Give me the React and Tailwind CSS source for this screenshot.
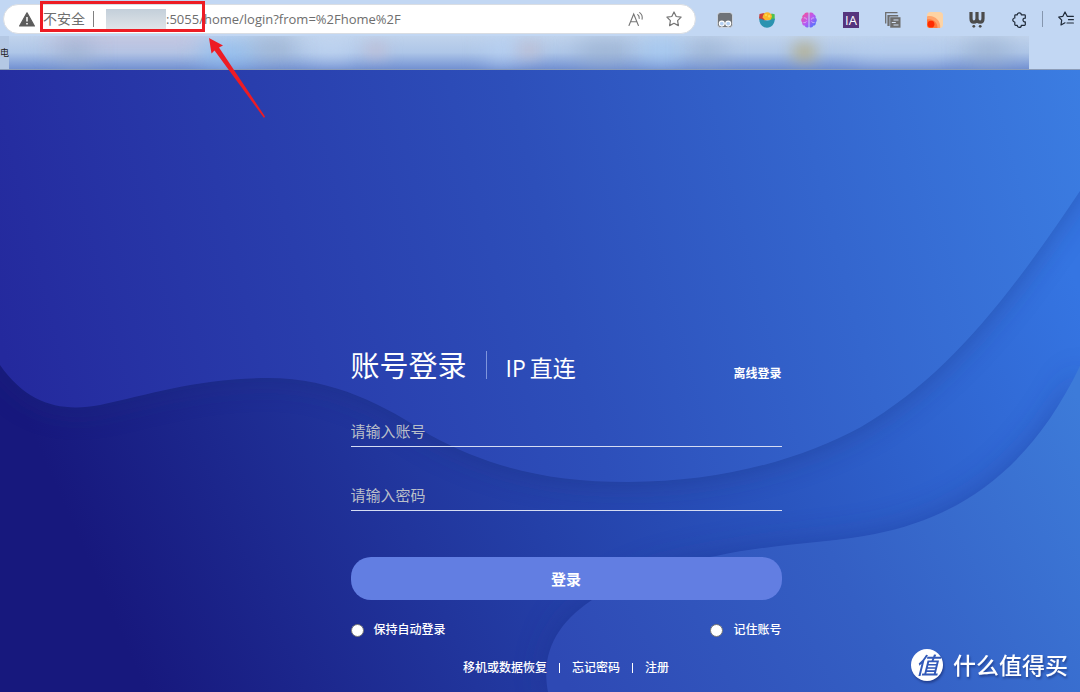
import { useState } from 'react';

function WarningIcon() {
  return (
    <svg viewBox="0 0 16 15" className="h-[15px] w-4 shrink-0" aria-hidden="true">
      <path d="M8 .8 15.4 14H.6z" fill="#5c5c5c" stroke="#5c5c5c" strokeWidth="1.2" strokeLinejoin="round" />
      <path d="M8 5v4.6M8 11v1.6" stroke="#fff" strokeWidth="1.5" />
    </svg>
  );
}

function ReadAloudIcon() {
  return (
    <svg viewBox="0 0 16 16" className="size-4" fill="none" stroke="#757575" strokeWidth="1.1" strokeLinecap="round" aria-hidden="true">
      <path d="M1 14.5 5.7 3l4.7 11.5M2.6 10.7h6.2" />
      <path d="M9.7 3.6c1.2.9 1.7 2.2 1.5 3.8M11.7 1.6c1.9 1.4 2.9 3.8 2.4 6.6" />
    </svg>
  );
}

function StarIcon() {
  return (
    <svg viewBox="0 0 16 16" className="size-4" fill="none" stroke="#757575" strokeWidth="1.2" strokeLinejoin="round" aria-hidden="true">
      <path d="M8 1l2.200 4.500 4.900.7-3.500 3.500.8 4.900L8 12.300l-4.400 2.300.8-4.900L.900 6.200l4.900-.7z" />
    </svg>
  );
}

const extensions = [
  {
    name: 'Tampermonkey',
    icon: (
      <>
        <rect x=".4" y=".4" width="15.2" height="15.2" rx="3.4" fill="#6f7378" stroke="#dfe6ef" strokeWidth=".8" />
        <circle cx="4.8" cy="11.6" r="2.5" fill="#b5d0f2" stroke="#fff" strokeWidth="1.1" />
        <circle cx="11.2" cy="11.6" r="2.5" fill="#b5d0f2" stroke="#fff" strokeWidth="1.1" />
      </>
    ),
  },
  {
    name: 'Salad',
    icon: (
      <>
        <path d="M.5 2 5.500 1l2 7.500H1.200L0 6z" fill="#c8403c" />
        <path d="M10 8 12.500 1.500l3.200.7V8z" fill="#4fc050" />
        <path d="M3.500 5.500C4 2 6 .2 8.300.2c2.500 0 4.400 1.800 4.700 4.300L11.500 8H6z" fill="#fbb829" />
        <circle cx="7" cy="3" r="1" fill="#ffdc4f" />
        <circle cx="10.2" cy="4.2" r="1.2" fill="#ffdc4f" />
        <path d="M.2 6.500C2.500 6.500 4.500 8.600 8 8.600s5.500-2.100 7.800-2.100c0 5.500-3.300 9.300-7.800 9.300S.2 12 .2 6.500z" fill="#2b93b0" />
      </>
    ),
  },
  {
    name: 'Brain',
    icon: (
      <>
        <defs>
          <linearGradient id="brain" x1="0" y1="0" x2="1" y2="1">
            <stop offset="0" stopColor="#ff4f8a" />
            <stop offset=".5" stopColor="#b95af2" />
            <stop offset="1" stopColor="#2f7bff" />
          </linearGradient>
        </defs>
        <path
          d="M7.500.8C5.500-.1 3.500.6 3.200 2.400 1.500 2.800.900 4.400 1.500 5.800-.2 7-.1 9.300 1.200 10.300c-.3 2 .8 3.200 2.300 3.300.8 1.900 2.700 2.300 4 1.300zM8.500.8c2-.9 4-.2 4.300 1.600 1.700.4 2.300 2 1.700 3.400 1.700 1.200 1.600 3.500.3 4.500.3 2-.8 3.200-2.300 3.300-.8 1.900-2.700 2.300-4 1.300z"
          fill="url(#brain)"
        />
        <path
          d="M2.800 6c1.500-.5 2.700.2 2.700 1.500M2.500 10.500c1.200.3 2.500-.2 3-1M13.200 6c-1.500-.5-2.700.2-2.700 1.500M13.500 10.500c-1.200.3-2.500-.2-3-1"
          fill="none"
          stroke="#d9ccf5"
          strokeWidth=".8"
        />
      </>
    ),
  },
  { name: 'Internet Archive', badge: 'IA' },
  {
    name: 'Copy pages',
    icon: (
      <>
        <path d="M.7 11.500V.7h11.800" fill="none" stroke="#6d6d6d" strokeWidth="1.3" />
        <path d="M2.400 3h10.800v1.600H4.600V14H2.400z" fill="#6d6d6d" />
        <path d="M5.200 5.200H15.500v10.500H5.200z" fill="#6d6d6d" />
        <path d="M8.500 8h5M6.800 10.500h4M8.500 13h5" stroke="#d5e2f5" strokeWidth="1.1" />
      </>
    ),
  },
  {
    name: 'Orange',
    icon: (
      <>
        <rect width="16" height="16" rx="3.5" fill="#fdd3a4" />
        <path d="M0 4.500C6.500 2.500 14 8 13.200 16H3a3 3 0 0 1-3-3z" fill="#ffa36b" />
        <path d="M0 7.500C5.500 6 10.500 10 10.500 16H3a3 3 0 0 1-3-3z" fill="#ff7a3c" />
        <circle cx="4" cy="12.200" r="3.400" fill="#ff2b00" />
      </>
    ),
  },
  {
    name: 'Web tools',
    icon: (
      <>
        <path d="M2 0v6.500C2 8.800 3 10.200 4.800 10.200S8 8.800 8 6.500V0v6.500c0 2.300 1.300 3.700 3.200 3.700S14 8.800 14 6.500V0" fill="none" stroke="#4b4b4b" strokeWidth="3.200" />
        <circle cx="4.800" cy="14.300" r="1.400" fill="#4b4b4b" />
        <circle cx="11.200" cy="14.300" r="1.400" fill="#4b4b4b" />
      </>
    ),
  },
  {
    name: 'Extensions',
    icon: (
      <path
        d="M4.600 2.800h1.700a2 2 0 0 1 4 0h3.200a.8.8 0 0 1 .8.8v2.600a1.900 1.900 0 1 0 0 3.700v2.700a.8.8 0 0 1-.8.800h-3.200a2 2 0 0 1-4 0H4.600a.8.8 0 0 1-.8-.8V10a2 2 0 0 1 0-4V3.600a.8.8 0 0 1 .8-.8z"
        fill="none"
        stroke="#1f2a38"
        strokeWidth="1.2"
        strokeLinejoin="round"
      />
    ),
  },
];

function AddressBar() {
  return (
    <div className="flex h-[30px] min-w-0 flex-1 items-center rounded-full border border-[#d9dde3] bg-white pr-[13px] pl-[15px]">
      <WarningIcon />
      <div className="relative ml-2 flex items-center text-[13px] leading-5 text-[#6e6e6e]">
        <span className="text-sm">不安全</span>
        <span className="mx-2 h-4 w-px bg-[#808080]" />
        <span className="ml-1 h-5 w-[60px] bg-linear-to-b from-[#c3cfda] to-[#dfe4e8]" />
        <span>:5055/home/login?from=%2Fhome%2F</span>
        {/* highlight frame over host and port */}
        <span className="absolute -top-2 -left-[3px] h-[31px] w-[165px] border-3 border-[#ed1c24]" />
      </div>
      <div className="ml-auto flex items-center gap-[22px]">
        <button aria-label="大声朗读"><ReadAloudIcon /></button>
        <button aria-label="收藏"><StarIcon /></button>
      </div>
    </div>
  );
}

function Toolbar() {
  return (
    <div className="flex h-9 items-center pt-[2px] pl-[3px]">
      <AddressBar />
      <div className="ml-[21px] flex shrink-0 items-center gap-[26px] pt-[2px]">
        {extensions.map((e) => (
          <button key={e.name} aria-label={e.name} className="size-4">
            {e.badge ? (
              <span className="block size-4 bg-[#55347d] text-center text-[13px] leading-4 text-white">{e.badge}</span>
            ) : (
              <svg viewBox="0 0 16 16" className="size-4" aria-hidden="true">{e.icon}</svg>
            )}
          </button>
        ))}
      </div>
      <span className="mx-[15px] h-4 w-px shrink-0 bg-[#8596ae]" />
      <button aria-label="收藏夹" className="w-[22px] shrink-0">
        <svg viewBox="0 0 16 16" className="size-4" fill="none" stroke="#1f2a38" strokeWidth="1.2" strokeLinejoin="round" strokeLinecap="round" aria-hidden="true">
          <path d="M9.200 5.300 7 1 4.900 5.300.700 6l3 3.200-.7 4.800 4-2.200M9.200 5.300h6.200M10.500 8.700h4.900M9 12h6.400" />
        </svg>
      </button>
    </div>
  );
}

function BookmarkBar() {
  return (
    <div className="flex h-[34px] border-b border-[#8b9cb8] text-[#222]">
      <div className="flex w-[9px] items-center bg-[#b4c8e4] text-[9px]">电</div>
      <div className="relative flex-1 overflow-hidden bg-linear-to-b from-[#c0d3ec] via-[#aec6e8] to-[#7391d2]">
        <span className="absolute -top-1 left-[4%] h-3 w-[15%] bg-[#c9b8d4] blur-md" />
        <span className="absolute top-2 left-[5%] h-4 w-[3%] bg-[#94a9c8] blur-md" />
        <span className="absolute top-2 left-[19%] h-5 w-[5%] bg-[#8dbdf0] blur-md" />
        <span className="absolute top-1 left-[24%] h-4 w-[4%] bg-[#95abc9] blur-md" />
        <span className="absolute top-1 left-[29%] h-4 w-[5%] bg-[#c5d9f4] blur-md" />
        <span className="absolute top-2 left-[35%] h-3 w-[2%] bg-[#c3bbd0] blur-sm" />
        <span className="absolute top-1 left-[47%] h-5 w-[3%] bg-[#b9d3f5] blur-md" />
        <span className="absolute top-2 left-[50%] h-3 w-[2%] bg-[#c1bacb] blur-sm" />
        <span className="absolute top-2 left-[56%] h-4 w-[5%] bg-[#94aac9] blur-md" />
        <span className="absolute top-1 left-[62%] h-5 w-[4%] bg-[#a2c9f3] blur-md" />
        <span className="absolute top-2 left-[67%] h-4 w-[3%] bg-[#94aac9] blur-md" />
        <span className="absolute top-2 left-[77%] h-4 w-[2%] bg-[#b5ac80] blur-sm" />
        <span className="absolute top-1 left-[83%] h-4 w-[9%] bg-[#b8d0f1] blur-md" />
        <span className="absolute top-2 left-[94%] h-4 w-[4%] bg-[#94aac9] blur-md" />
      </div>
      <div className="w-[51px]" />
    </div>
  );
}

function Waves() {
  return (
    <svg viewBox="0 0 1080 622" preserveAspectRatio="none" className="absolute inset-0 size-full" aria-hidden="true">
      <defs>
        <linearGradient id="sky" gradientUnits="userSpaceOnUse" x1="0" y1="270" x2="1080" y2="0">
          <stop offset="0" stopColor="#24299d" />
          <stop offset=".5" stopColor="#2d4fba" />
          <stop offset="1" stopColor="#3b7de2" />
        </linearGradient>
        <linearGradient id="deep" gradientUnits="userSpaceOnUse" x1="110" y1="540" x2="1040" y2="130">
          <stop offset="0" stopColor="#17187d" />
          <stop offset=".3" stopColor="#21359c" />
          <stop offset=".65" stopColor="#2a55bf" />
          <stop offset="1" stopColor="#3575e2" />
        </linearGradient>
        <linearGradient id="shore" gradientUnits="userSpaceOnUse" x1="560" y1="600" x2="1080" y2="330">
          <stop offset="0" stopColor="#2e49b4" />
          <stop offset=".5" stopColor="#345fc4" />
          <stop offset="1" stopColor="#3d7bd9" />
        </linearGradient>
        <filter id="soft" x="-10%" y="-10%" width="120%" height="120%">
          <feGaussianBlur stdDeviation="16" />
        </filter>
      </defs>
      <rect width="1080" height="622" fill="url(#deep)" />
      <path
        d="M-40 -40V240L0 295C28 335 62 342 100 335C150 324 200 308 268 308C335 308 385 336 430 365C490 398 550 412 628 412C720 412 800 390 861 357C950 305 1010 225 1080 121L1130 -40Z"
        fill="#1f2c74"
        opacity=".4"
        filter="url(#soft)"
      />
      <path
        d="M546 622C544 590 550 548 592 530C640 498 680 491 716 486C770 474 830 473 875 464C960 447 1030 400 1080 296V622Z"
        fill="#1b2f88"
        opacity=".4"
        filter="url(#soft)"
      />
      <path
        d="M0 0V295C28 335 62 342 100 335C150 324 200 308 268 308C335 308 385 336 430 365C490 398 550 412 628 412C720 412 800 390 861 357C950 305 1010 225 1080 121V0Z"
        fill="url(#sky)"
      />
      <path
        d="M548 622C542 590 550 558 592 530C632 500 675 492 716 486C770 474 830 473 875 464C960 447 1030 400 1080 296V622Z"
        fill="url(#shore)"
      />
    </svg>
  );
}

function RoundCheck({ label, checked, onChange }) {
  return (
    <label className="flex items-center gap-[10px]">
      <input
        type="checkbox"
        checked={checked}
        onChange={onChange}
        className="size-[13px] appearance-none rounded-full border border-[#767676] bg-white checked:bg-[#627ee2]"
      />
      {label}
    </label>
  );
}

function LoginForm() {
  const [account, setAccount] = useState('');
  const [password, setPassword] = useState('');
  const [auto, setAuto] = useState(false);
  const [remember, setRemember] = useState(false);

  return (
    <form onSubmit={(e) => e.preventDefault()} className="relative mx-auto w-[431px] text-xs font-medium text-white">
      <div className="flex h-10 items-center">
        <button type="button" className="pt-[2px] text-[29px] leading-10 font-normal">账号登录</button>
        <span className="mx-[19px] h-7 w-px bg-[#7f95dc]" />
        <button type="button" className="flex gap-1 pt-[6px] text-[23px] leading-8 font-normal">
          <span>IP</span>
          <span>直连</span>
        </button>
        <a href="#offline" className="ml-auto pt-[18px] font-bold">离线登录</a>
      </div>
      <input
        type="text"
        aria-label="账号"
        placeholder="请输入账号"
        value={account}
        onChange={(e) => setAccount(e.target.value)}
        className="mt-[30px] block h-8 w-full border-b border-[#d5dcf3] text-[15px] font-normal outline-none placeholder:text-[#b9bfc9]"
      />
      <input
        type="password"
        aria-label="密码"
        placeholder="请输入密码"
        value={password}
        onChange={(e) => setPassword(e.target.value)}
        className="mt-8 block h-8 w-full border-b border-[#d5dcf3] text-[15px] font-normal outline-none placeholder:text-[#b9bfc9]"
      />
      <button className="mt-[46px] block h-[43px] w-full rounded-[20px] bg-[#627ee2] text-[15px] font-bold">登录</button>
      <div className="mt-5 flex h-5 items-center justify-between">
        <RoundCheck label="保持自动登录" checked={auto} onChange={() => setAuto(!auto)} />
        <RoundCheck label="记住账号" checked={remember} onChange={() => setRemember(!remember)} />
      </div>
      <div className="mt-[18px] flex h-5 items-center justify-center gap-3">
        <a href="#restore">移机或数据恢复</a>
        <span className="h-[10px] w-px bg-white" />
        <a href="#forgot">忘记密码</a>
        <span className="h-[10px] w-px bg-white" />
        <a href="#register">注册</a>
      </div>
    </form>
  );
}

export default function App() {
  return (
    <div className="relative flex min-h-screen flex-col bg-[#c2d7f3] font-['Open_Sans','Noto_Sans_CJK_SC',sans-serif]">
      <header>
        <Toolbar />
        <BookmarkBar />
      </header>
      <main className="relative flex flex-1 flex-col justify-end overflow-hidden pb-[14px] pl-[52px]">
        <Waves />
        <LoginForm />
      </main>

      {/* arrow pointing at the port number */}
      <svg viewBox="0 0 60 84" className="absolute top-9 left-[207px] h-[84px] w-[60px]" aria-hidden="true">
        <path d="M2 2 16 9.500 12 11.500 58 80.500 57 82 7.500 14.500 4.500 17.500z" fill="#ed1c24" />
      </svg>

      <div className="absolute right-3 bottom-[11px] flex items-center gap-[10px] text-white drop-shadow-[1px_2px_1px_rgba(20,40,110,0.6)]">
        <span className="flex size-8 items-center justify-center rounded-full bg-white text-[23px] leading-8 font-medium text-[#3159b8] italic">值</span>
        <span className="text-[23px] leading-8 font-medium">什么值得买</span>
      </div>
    </div>
  );
}
